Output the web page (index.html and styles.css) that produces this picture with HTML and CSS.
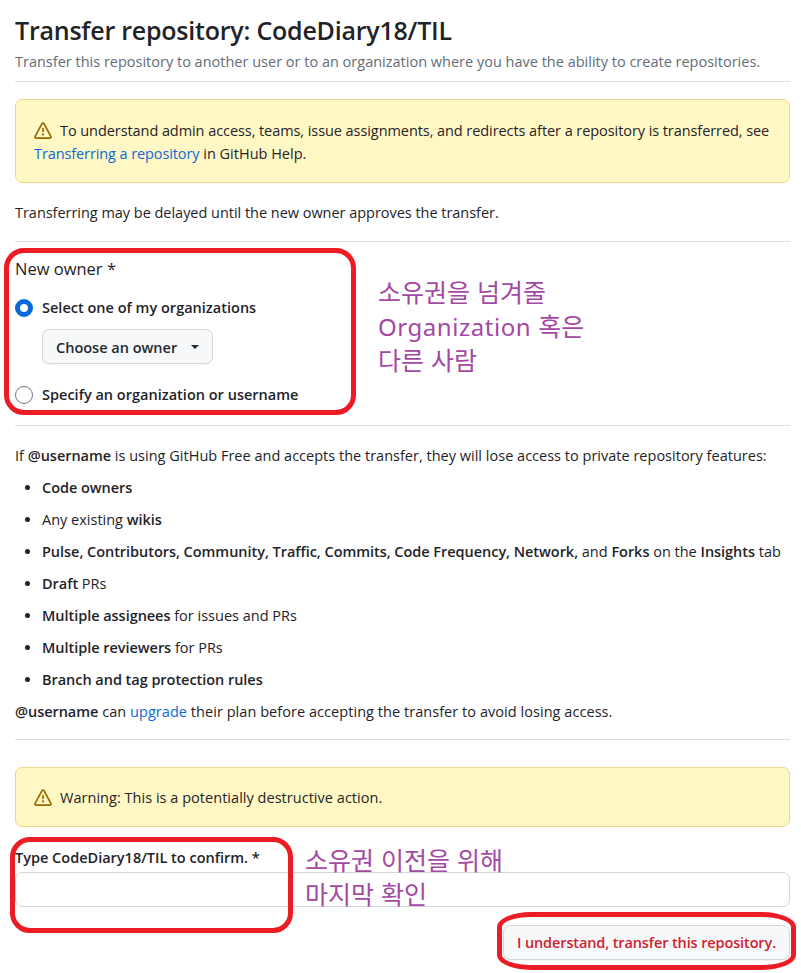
FILE: index.html
```html
<!DOCTYPE html>
<html lang="en">
<head>
<meta charset="UTF-8">
<meta name="viewport" content="width=device-width, initial-scale=1.0">
<title>Transfer repository</title>
<link rel="stylesheet" href="styles.css">
</head>
<body>
<div class="container">
  <div class="subhead">
    <h1>Transfer repository: CodeDiary18/TIL</h1>
    <p class="description">Transfer this repository to another user or to an organization where you have the ability to create repositories.</p>
  </div>

  <div class="flash">
    <svg class="icon-alert" viewBox="0 0 16 16" width="18" height="18"><path d="M6.457 1.047c.659-1.234 2.427-1.234 3.086 0l6.082 11.378A1.75 1.75 0 0 1 14.082 15H1.918a1.75 1.75 0 0 1-1.543-2.575Zm1.763.707a.25.25 0 0 0-.44 0L1.698 13.132a.25.25 0 0 0 .22.368h12.164a.25.25 0 0 0 .22-.368Zm.53 3.996v2.5a.75.75 0 0 1-1.5 0v-2.5a.75.75 0 0 1 1.5 0ZM9 11a1 1 0 1 1-2 0 1 1 0 0 1 2 0Z"/></svg><span class="flash-text">To understand admin access, teams, issue assignments, and redirects after a repository is transferred, see</span><br>
    <a href="#" class="help-link">Transferring a repository</a> in GitHub Help.
  </div>

  <p class="delay-note">Transferring may be delayed until the new owner approves the transfer.</p>

  <form>
    <div class="owner">
      <p class="owner-title">New owner *</p>
      <label class="radio-row"><input type="radio" name="owner" checked><span>Select one of my organizations</span></label>
      <button type="button" class="btn btn-owner">Choose an owner<span class="caret"></span></button>
      <label class="radio-row"><input type="radio" name="owner"><span>Specify an organization or username</span></label>
      <div class="mark mark-owner"></div>
      <p class="memo memo-owner" lang="ko">소유권을 넘겨줄<br><span class="memo-latin">Organization</span> 혹은<br>다른 사람</p>
    </div>

    <div class="features">
      <p class="intro">If <b>@username</b> is using GitHub Free and accepts the transfer, they will lose access to private repository features:</p>
      <ul>
        <li><b>Code owners</b></li>
        <li>Any existing <b>wikis</b></li>
        <li><b>Pulse, Contributors, Community, Traffic, Commits, Code Frequency, Network,</b> and <b>Forks</b> on the <b>Insights</b> tab</li>
        <li><b>Draft</b> PRs</li>
        <li><b>Multiple assignees</b> for issues and PRs</li>
        <li><b>Multiple reviewers</b> for PRs</li>
        <li><b>Branch and tag protection rules</b></li>
      </ul>
      <p class="upgrade"><b>@username</b> can <a href="#">upgrade</a> their plan before accepting the transfer to avoid losing access.</p>
    </div>

    <div class="flash flash-warning">
      <svg class="icon-alert" viewBox="0 0 16 16" width="18" height="18"><path d="M6.457 1.047c.659-1.234 2.427-1.234 3.086 0l6.082 11.378A1.75 1.75 0 0 1 14.082 15H1.918a1.75 1.75 0 0 1-1.543-2.575Zm1.763.707a.25.25 0 0 0-.44 0L1.698 13.132a.25.25 0 0 0 .22.368h12.164a.25.25 0 0 0 .22-.368Zm.53 3.996v2.5a.75.75 0 0 1-1.5 0v-2.5a.75.75 0 0 1 1.5 0ZM9 11a1 1 0 1 1-2 0 1 1 0 0 1 2 0Z"/></svg><span>Warning: This is a potentially destructive action.</span>
    </div>

    <div class="confirm">
      <label for="confirm">Type CodeDiary18/TIL to confirm. *</label>
      <input type="text" id="confirm" class="confirm-input">
      <div class="mark mark-confirm"></div>
      <p class="memo memo-confirm" lang="ko">소유권 이전을 위해<br>마지막 확인</p>
    </div>

    <div class="actions">
      <button type="button" class="btn btn-danger">I understand, transfer this repository.</button>
      <div class="mark mark-submit"></div>
    </div>
  </form>
</div>
</body>
</html>
```
FILE: styles.css
```css
* {
  box-sizing: border-box;
  margin: 0;
  padding: 0;
}
body {
  min-height: 973px;
  background: #fff;
  color: #1f2328;
  font-family: "Open Sans", "Noto Sans", sans-serif;
  font-size: 14.5px;
  line-height: 23px;
}
b {
  font-weight: 600;
  letter-spacing: -0.04px;
}
a {
  color: #0969da;
  text-decoration: none;
}
.container {
  width: 775px;
  margin-left: 15px;
  padding-top: 11px;
  white-space: nowrap;
}
.subhead {
  height: 71px;
  border-bottom: 1px solid #d8dee4;
}
h1 {
  font-size: 25px;
  font-weight: 600;
  line-height: 39px;
  letter-spacing: -0.22px;
}
.description {
  color: #656d76;
}
.flash {
  height: 84px;
  margin-top: 17px;
  padding: 19px 18px;
  background: #fff8c5;
  border: 1px solid #eed888;
  border-radius: 7px;
}
.flash-text {
  letter-spacing: -0.07px;
}
.help-link {
  letter-spacing: -0.1px;
}
.icon-alert {
  display: inline-block;
  margin-right: 8px;
  fill: #9a6700;
  vertical-align: -4px;
}
.delay-note {
  height: 59px;
  padding-top: 18px;
  border-bottom: 1px solid #d8dee4;
  letter-spacing: -0.03px;
}
.owner {
  position: relative;
  height: 184px;
  padding-top: 15px;
  border-bottom: 1px solid #d8dee4;
}
.owner-title {
  font-size: 16.5px;
}
.radio-row {
  display: flex;
  align-items: center;
  gap: 9px;
  margin-top: 16px;
  font-weight: 600;
  letter-spacing: 0.01px;
}
.radio-row input {
  appearance: none;
  width: 18px;
  height: 18px;
  border: 1px solid #6e7781;
  border-radius: 50%;
}
.radio-row input:checked {
  border: 5px solid #0969da;
}
.btn {
  height: 35px;
  background: #f6f8fa;
  border: 1px solid #d5d8da;
  border-radius: 7px;
  box-shadow: 0 1px 0 rgba(31, 35, 40, 0.04);
  color: #24292f;
  font-family: inherit;
  font-size: 14.5px;
  font-weight: 600;
}
.btn-owner {
  display: flex;
  align-items: center;
  justify-content: space-between;
  width: 171px;
  margin: 10px 0 19px 27px;
  padding: 1px 13px 0;
}
.caret {
  border: 4px solid transparent;
  border-top-color: #24292f;
  border-bottom-width: 0;
}
.features {
  height: 314px;
  padding-top: 18px;
  border-bottom: 1px solid #d8dee4;
}
.intro {
  letter-spacing: 0.01px;
}
ul {
  padding-left: 27px;
}
li {
  margin-top: 9px;
}
.upgrade {
  margin-top: 9px;
  letter-spacing: 0.05px;
}
.flash-warning {
  height: 60px;
  margin-top: 27px;
  padding-top: 18px;
  letter-spacing: 0.03px;
}
.confirm {
  position: relative;
  padding-top: 19px;
}
.confirm label {
  display: block;
  font-weight: 600;
}
.confirm-input {
  display: block;
  width: 100%;
  height: 35px;
  margin-top: 3px;
  border: 1px solid #d0d7de;
  border-radius: 7px;
}
.actions {
  position: relative;
  display: flex;
  justify-content: flex-end;
  margin-top: 18px;
}
.btn-danger {
  width: 287px;
  color: #cf222e;
  letter-spacing: -0.12px;
}

/* hand-drawn notes on top of the form */
.mark {
  position: absolute;
  border: 5px solid #ed1c24;
  border-radius: 20px;
  pointer-events: none;
}
.mark-owner {
  left: -11px;
  top: 6px;
  width: 352px;
  height: 167px;
}
.mark-confirm {
  left: -5px;
  top: 10px;
  width: 283px;
  height: 96px;
}
.mark-submit {
  right: -6px;
  top: -13px;
  width: 299px;
  height: 58px;
  border-radius: 34px / 15px;
}
.memo {
  position: absolute;
  color: #a349a4;
  font-family: "Noto Sans CJK KR", sans-serif;
  font-size: 25px;
  font-weight: 400;
  line-height: 34px;
}
.memo-latin {
  font-family: "Noto Sans", sans-serif;
  font-size: 24px;
  letter-spacing: 0.55px;
}
.memo-owner {
  left: 363px;
  top: 33px;
  line-height: 33.5px;
}
.memo-confirm {
  left: 290px;
  top: 15px;
}
```
